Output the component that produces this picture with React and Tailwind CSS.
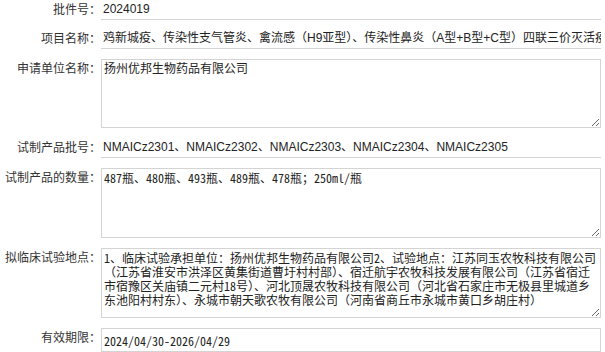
import React from 'react';

const sans = 'font-["Liberation_Sans","Noto_Sans_CJK_SC",sans-serif]';
const mono = 'font-["Noto_Sans_Mono_CJK_SC","Liberation_Mono","Noto_Sans_CJK_SC",monospace]';

function Label({ children }) {
  return (
    <div className={`w-[101px] shrink-0 text-right text-[12px] leading-[20px] text-[#333] ${sans}`}>
      {children}
    </div>
  );
}

function LineValue({ children }) {
  return (
    <div
      className={`h-[20px] min-w-0 flex-1 overflow-hidden whitespace-nowrap border-b border-[#d4d4d4] pl-[2px] text-[12px] leading-[19px] text-[#222] ${sans}`}
    >
      {children}
    </div>
  );
}

function Area({ value, height, font }) {
  return (
    <textarea
      readOnly
      value={value}
      className={`block w-full min-w-0 flex-1 border border-[#d4d4d4] bg-white px-[2px] py-[2px] text-[12px] leading-[14px] text-[#222] outline-none ${font} ${height}`}
    />
  );
}

export default function App() {
  return (
    <div className="h-[352px] w-[605px] overflow-hidden bg-white pr-[4px]">
      <div className="flex">
        <Label>批件号：</Label>
        <LineValue>2024019</LineValue>
      </div>

      <div className="mt-[9px] flex">
        <Label>项目名称：</Label>
        <LineValue>
          鸡新城疫、传染性支气管炎、禽流感（H9亚型）、传染性鼻炎（A型+B型+C型）四联三价灭活疫苗
        </LineValue>
      </div>

      <div className="mt-[10px] flex">
        <Label>申请单位名称：</Label>
        <Area value="扬州优邦生物药品有限公司" height="h-[69px]" font={sans} />
      </div>

      <div className="mt-[10px] flex">
        <Label>试制产品批号：</Label>
        <LineValue>NMAICz2301、NMAICz2302、NMAICz2303、NMAICz2304、NMAICz2305</LineValue>
      </div>

      <div className="mt-[10px] flex">
        <Label>试制产品的数量：</Label>
        <Area value="487瓶、480瓶、493瓶、489瓶、478瓶；250ml/瓶" height="h-[70px]" font={mono} />
      </div>

      <div className="mt-[10px] flex">
        <Label>拟临床试验地点：</Label>
        <Area
          value="1、临床试验承担单位：扬州优邦生物药品有限公司2、试验地点：江苏同玉农牧科技有限公司（江苏省淮安市洪泽区黄集街道曹圩村村部）、宿迁航宇农牧科技发展有限公司（江苏省宿迁市宿豫区关庙镇二元村18号）、河北顶晟农牧科技有限公司（河北省石家庄市无极县里城道乡东池阳村村东）、永城市朝天歌农牧有限公司（河南省商丘市永城市黄口乡胡庄村）"
          height="h-[70px]"
          font={mono}
        />
      </div>

      <div className="mt-[10px] flex">
        <Label>有效期限：</Label>
        <input
          readOnly
          value="2024/04/30-2026/04/29"
          className={`block h-[24px] min-w-0 flex-1 border border-[#d4d4d4] bg-white px-[2px] text-[12px] leading-[18px] text-[#222] outline-none ${mono}`}
        />
      </div>
    </div>
  );
}
